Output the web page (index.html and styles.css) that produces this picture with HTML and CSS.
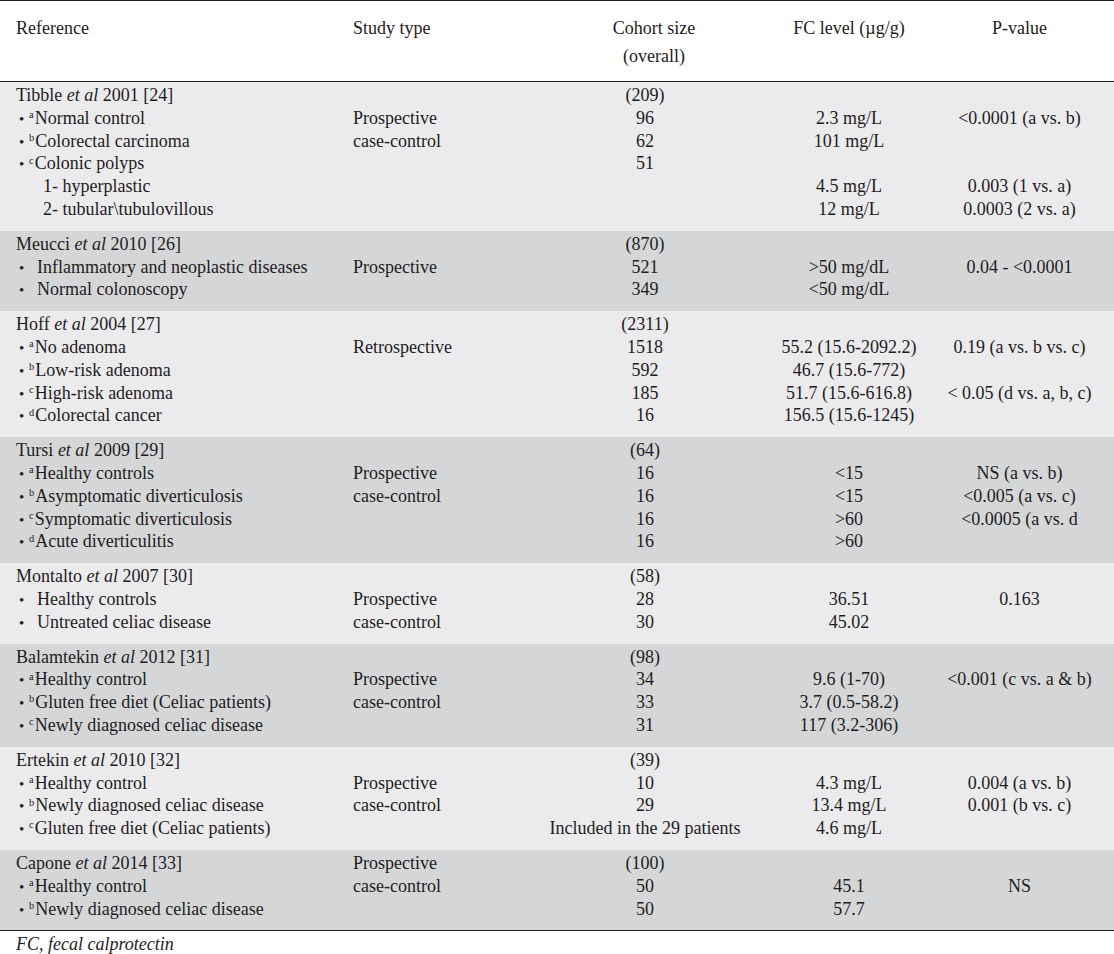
FILE: index.html
```html
<!DOCTYPE html>
<html lang="en">
<head>
<meta charset="utf-8">
<title>Fecal calprotectin studies</title>
<link rel="stylesheet" href="styles.css">
</head>
<body>
<table class="tbl">
  <colgroup>
    <col class="c1"><col class="c2"><col class="c3"><col class="c4"><col class="c5">
  </colgroup>
  <thead>
    <tr>
      <th class="left">Reference</th>
      <th class="left">Study type</th>
      <th class="ctr coh">Cohort size<br>(overall)</th>
      <th class="ctr">FC level (µg/g)</th>
      <th class="ctr pv"><div class="pvw">P-value</div></th>
    </tr>
  </thead>
  <tbody>
    <tr class="light">
      <td><div>Tibble <i>et al</i> 2001 [24]</div><div class="li"><span class="bul">•</span><sup>a</sup>Normal control</div><div class="li"><span class="bul">•</span><sup>b</sup>Colorectal carcinoma</div><div class="li"><span class="bul">•</span><sup>c</sup>Colonic polyps</div><div class="sub">1- hyperplastic</div><div class="sub">2- tubular\tubulovillous</div></td>
      <td class="st"><div>&nbsp;</div><div>Prospective</div><div>case-control</div></td>
      <td class="ctr"><div>(209)</div><div>96</div><div>62</div><div>51</div></td>
      <td class="ctr"><div>&nbsp;</div><div>2.3 mg/L</div><div>101 mg/L</div><div>&nbsp;</div><div>4.5 mg/L</div><div>12 mg/L</div></td>
      <td class="ctr pv"><div class="pvw"><div>&nbsp;</div><div>&lt;0.0001 (a vs. b)</div><div>&nbsp;</div><div>&nbsp;</div><div>0.003 (1 vs. a)</div><div>0.0003 (2 vs. a)</div></div></td>
    </tr>
    <tr class="dark">
      <td><div>Meucci <i>et al</i> 2010 [26]</div><div class="li plain"><span class="bul">•</span>Inflammatory and neoplastic diseases</div><div class="li plain"><span class="bul">•</span>Normal colonoscopy</div></td>
      <td class="st"><div>&nbsp;</div><div>Prospective</div></td>
      <td class="ctr"><div>(870)</div><div>521</div><div>349</div></td>
      <td class="ctr"><div>&nbsp;</div><div>&gt;50 mg/dL</div><div>&lt;50 mg/dL</div></td>
      <td class="ctr pv"><div class="pvw"><div>&nbsp;</div><div>0.04 - &lt;0.0001</div></div></td>
    </tr>
    <tr class="light">
      <td><div>Hoff <i>et al</i> 2004 [27]</div><div class="li"><span class="bul">•</span><sup>a</sup>No adenoma</div><div class="li"><span class="bul">•</span><sup>b</sup>Low-risk adenoma</div><div class="li"><span class="bul">•</span><sup>c</sup>High-risk adenoma</div><div class="li"><span class="bul">•</span><sup>d</sup>Colorectal cancer</div></td>
      <td class="st"><div>&nbsp;</div><div>Retrospective</div></td>
      <td class="ctr"><div>(2311)</div><div>1518</div><div>592</div><div>185</div><div>16</div></td>
      <td class="ctr"><div>&nbsp;</div><div>55.2 (15.6-2092.2)</div><div>46.7 (15.6-772)</div><div>51.7 (15.6-616.8)</div><div>156.5 (15.6-1245)</div></td>
      <td class="ctr pv"><div class="pvw"><div>&nbsp;</div><div>0.19 (a vs. b vs. c)</div><div>&nbsp;</div><div>&lt; 0.05 (d vs. a, b, c)</div></div></td>
    </tr>
    <tr class="dark">
      <td><div>Tursi <i>et al</i> 2009 [29]</div><div class="li"><span class="bul">•</span><sup>a</sup>Healthy controls</div><div class="li"><span class="bul">•</span><sup>b</sup>Asymptomatic diverticulosis</div><div class="li"><span class="bul">•</span><sup>c</sup>Symptomatic diverticulosis</div><div class="li"><span class="bul">•</span><sup>d</sup>Acute diverticulitis</div></td>
      <td class="st"><div>&nbsp;</div><div>Prospective</div><div>case-control</div></td>
      <td class="ctr"><div>(64)</div><div>16</div><div>16</div><div>16</div><div>16</div></td>
      <td class="ctr"><div>&nbsp;</div><div>&lt;15</div><div>&lt;15</div><div>&gt;60</div><div>&gt;60</div></td>
      <td class="ctr pv"><div class="pvw"><div>&nbsp;</div><div>NS (a vs. b)</div><div>&lt;0.005 (a vs. c)</div><div>&lt;0.0005 (a vs. d</div></div></td>
    </tr>
    <tr class="light">
      <td><div>Montalto <i>et al</i> 2007 [30]</div><div class="li plain"><span class="bul">•</span>Healthy controls</div><div class="li plain"><span class="bul">•</span>Untreated celiac disease</div></td>
      <td class="st"><div>&nbsp;</div><div>Prospective</div><div>case-control</div></td>
      <td class="ctr"><div>(58)</div><div>28</div><div>30</div></td>
      <td class="ctr"><div>&nbsp;</div><div>36.51</div><div>45.02</div></td>
      <td class="ctr pv"><div class="pvw"><div>&nbsp;</div><div>0.163</div></div></td>
    </tr>
    <tr class="dark">
      <td><div>Balamtekin <i>et al</i> 2012 [31]</div><div class="li"><span class="bul">•</span><sup>a</sup>Healthy control</div><div class="li"><span class="bul">•</span><sup>b</sup>Gluten free diet (Celiac patients)</div><div class="li"><span class="bul">•</span><sup>c</sup>Newly diagnosed celiac disease</div></td>
      <td class="st"><div>&nbsp;</div><div>Prospective</div><div>case-control</div></td>
      <td class="ctr"><div>(98)</div><div>34</div><div>33</div><div>31</div></td>
      <td class="ctr"><div>&nbsp;</div><div>9.6 (1-70)</div><div>3.7 (0.5-58.2)</div><div>117 (3.2-306)</div></td>
      <td class="ctr pv"><div class="pvw"><div>&nbsp;</div><div>&lt;0.001 (c vs. a &amp; b)</div></div></td>
    </tr>
    <tr class="light">
      <td><div>Ertekin <i>et al</i> 2010 [32]</div><div class="li"><span class="bul">•</span><sup>a</sup>Healthy control</div><div class="li"><span class="bul">•</span><sup>b</sup>Newly diagnosed celiac disease</div><div class="li"><span class="bul">•</span><sup>c</sup>Gluten free diet (Celiac patients)</div></td>
      <td class="st"><div>&nbsp;</div><div>Prospective</div><div>case-control</div></td>
      <td class="ctr"><div>(39)</div><div>10</div><div>29</div><div>Included in the 29 patients</div></td>
      <td class="ctr"><div>&nbsp;</div><div>4.3 mg/L</div><div>13.4 mg/L</div><div>4.6 mg/L</div></td>
      <td class="ctr pv"><div class="pvw"><div>&nbsp;</div><div>0.004 (a vs. b)</div><div>0.001 (b vs. c)</div></div></td>
    </tr>
    <tr class="dark">
      <td><div>Capone <i>et al</i> 2014 [33]</div><div class="li"><span class="bul">•</span><sup>a</sup>Healthy control</div><div class="li"><span class="bul">•</span><sup>b</sup>Newly diagnosed celiac disease</div></td>
      <td class="st"><div>Prospective</div><div>case-control</div></td>
      <td class="ctr"><div>(100)</div><div>50</div><div>50</div></td>
      <td class="ctr"><div>&nbsp;</div><div>45.1</div><div>57.7</div></td>
      <td class="ctr pv"><div class="pvw"><div>&nbsp;</div><div>NS</div></div></td>
    </tr>
  </tbody>
</table>
<p class="foot">FC, fecal calprotectin</p>
</body>
</html>
```
FILE: styles.css
```css
html, body {
  margin: 0;
  padding: 0;
  background: #ffffff;
}
body {
  font-family: "Liberation Serif", "Times New Roman", serif;
  font-size: 18px;
  color: #1f1c1d;
}
.tbl {
  width: 1114px;
  border-collapse: collapse;
  table-layout: fixed;
  border-top: 1px solid #231f20;
  border-bottom: 1px solid #231f20;
}
.c1 { width: 337px; }
.c2 { width: 208px; }
.c3 { width: 200px; }
.c4 { width: 208px; }
.c5 { width: 161px; }

.tbl th {
  font-weight: normal;
  vertical-align: top;
  line-height: 28px;
  padding: 13px 0 11px 0;
  border-bottom: 1px solid #231f20;
  white-space: nowrap;
}
.tbl th.left { text-align: left; padding-left: 16px; }
.tbl th.coh { padding-left: 18px; }
.tbl td {
  vertical-align: top;
  line-height: 22.8px;
  padding: 2px 0 10px 0;
  white-space: nowrap;
}
.tbl td div {
  height: 22.8px;
}
.tbl td .pvw {
  height: auto;
}
.tbl td:first-child { padding-left: 16px; }
.tbl td.st { padding-left: 16px; }
.ctr { text-align: center; }
.pvw {
  margin-left: -28px;
}
.light td { background: #ebebed; }
.dark td { background: #d5d6d8; }

.li .bul {
  display: inline-block;
  width: 10px;
  margin-left: 3px;
  font-size: 15px;
  line-height: 10px;
}
.li.plain .bul { width: 18px; }
.sub { padding-left: 27px; }
sup {
  font-size: 0.58em;
  line-height: 0;
  vertical-align: 0.55em;
  margin-right: 1px;
}
.foot {
  margin: 0;
  padding: 2px 0 0 16px;
  line-height: 22px;
  font-style: italic;
}
```
